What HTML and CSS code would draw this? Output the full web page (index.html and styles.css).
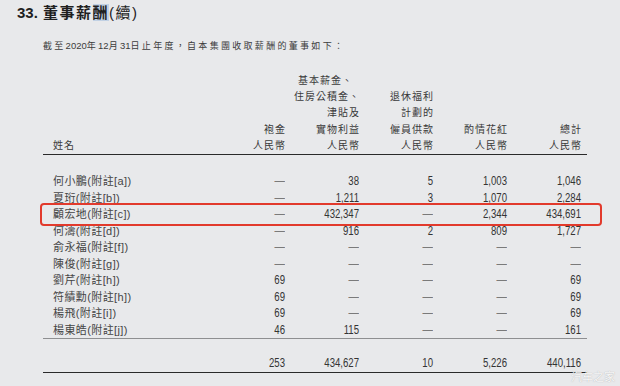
FILE: index.html
```html
<!DOCTYPE html>
<html lang="zh-Hant">
<head>
<meta charset="utf-8">
<title>董事薪酬</title>
<link rel="stylesheet" href="styles.css">
</head>
<body>
<div class="page">
  <h1 class="title"><span class="t-num">33.</span><span class="t-main">董事薪<span class="sel">酬</span></span><span class="t-sub">(續)</span></h1>
  <p class="intro">截至<span class="d">2020</span>年<span class="d">12</span>月<span class="d">31</span>日止年度，自本集團收取薪酬的董事如下：</p>

  <div class="tbl">
    <div class="row head">
      <div class="c name">姓名</div>
      <div class="c">袍金<br>人民幣</div>
      <div class="c"><span class="l1">基本薪金、</span><br>住房公積金、<br>津貼及<br>實物利益<br>人民幣</div>
      <div class="c">退休福利<br>計劃的<br>僱員供款<br>人民幣</div>
      <div class="c">酌情花紅<br>人民幣</div>
      <div class="c">總計<br>人民幣</div>
    </div>

    <div class="body">
      <div class="row"><div class="c name">何小鵬(附註[a])</div><div class="c"><span class="dash">—</span></div><div class="c">38</div><div class="c">5</div><div class="c">1,003</div><div class="c">1,046</div></div>
      <div class="row"><div class="c name">夏珩(附註[b])</div><div class="c"><span class="dash">—</span></div><div class="c">1,211</div><div class="c">3</div><div class="c">1,070</div><div class="c">2,284</div></div>
      <div class="row mark"><div class="c name">顧宏地(附註[c])</div><div class="c"><span class="dash">—</span></div><div class="c">432,347</div><div class="c"><span class="dash">—</span></div><div class="c">2,344</div><div class="c">434,691</div></div>
      <div class="row"><div class="c name">何濤(附註[d])</div><div class="c"><span class="dash">—</span></div><div class="c">916</div><div class="c">2</div><div class="c">809</div><div class="c">1,727</div></div>
      <div class="row"><div class="c name">俞永福(附註[f])</div><div class="c"><span class="dash">—</span></div><div class="c"><span class="dash">—</span></div><div class="c"><span class="dash">—</span></div><div class="c"><span class="dash">—</span></div><div class="c"><span class="dash">—</span></div></div>
      <div class="row"><div class="c name">陳俊(附註[g])</div><div class="c"><span class="dash">—</span></div><div class="c"><span class="dash">—</span></div><div class="c"><span class="dash">—</span></div><div class="c"><span class="dash">—</span></div><div class="c"><span class="dash">—</span></div></div>
      <div class="row"><div class="c name">劉芹(附註[h])</div><div class="c">69</div><div class="c"><span class="dash">—</span></div><div class="c"><span class="dash">—</span></div><div class="c"><span class="dash">—</span></div><div class="c">69</div></div>
      <div class="row"><div class="c name">符績勳(附註[h])</div><div class="c">69</div><div class="c"><span class="dash">—</span></div><div class="c"><span class="dash">—</span></div><div class="c"><span class="dash">—</span></div><div class="c">69</div></div>
      <div class="row"><div class="c name">楊飛(附註[i])</div><div class="c">69</div><div class="c"><span class="dash">—</span></div><div class="c"><span class="dash">—</span></div><div class="c"><span class="dash">—</span></div><div class="c">69</div></div>
      <div class="row"><div class="c name">楊東皓(附註[j])</div><div class="c">46</div><div class="c">115</div><div class="c"><span class="dash">—</span></div><div class="c"><span class="dash">—</span></div><div class="c">161</div></div>
    </div>

    <div class="row total">
      <div class="c name"></div><div class="c">253</div><div class="c">434,627</div><div class="c">10</div><div class="c">5,226</div><div class="c">440,116</div>
    </div>
  </div>
</div>
<div class="watermark">汽车之家</div>
</body>
</html>
```
FILE: styles.css
```css
html, body {
  margin: 0;
  padding: 0;
}
body {
  width: 620px;
  height: 386px;
  overflow: hidden;
  background: #e8e9eb;
  font-family: "Liberation Sans", "Noto Sans CJK TC", sans-serif;
  color: #3a3a3a;
  position: relative;
}
.page {
  padding: 4px 33px 0 17px;
}
.title {
  margin: 0;
  height: 18px;
  line-height: 18px;
  font-size: 15px;
  display: flex;
  align-items: center;
  color: #1f1f1f;
}
.t-num {
  font-weight: 700;
  width: 26px;
}
.t-main {
  font-weight: 700;
  letter-spacing: 1.5px;
}
.sel {
  background: rgba(120, 165, 215, 0.35);
}
.t-sub {
  font-weight: 400;
  letter-spacing: 1.5px;
}
.intro {
  margin: 18px 0 0 26px;
  font-size: 9px;
  line-height: 12px;
  letter-spacing: 2.3px;
  color: #3c3c3c;
}
.intro .d {
  letter-spacing: 0;
  font-size: 9.5px;
}
.tbl {
  margin: 21px 0 0 26px;
}
.row {
  display: grid;
  grid-template-columns: 1fr repeat(5, 74px);
  padding-right: 6px;
}
.c {
  text-align: right;
  white-space: nowrap;
}
.c.name {
  text-align: left;
  padding-left: 10px;
}
.head {
  align-items: end;
  font-size: 10px;
  line-height: 16.2px;
  letter-spacing: 1px;
  color: #3a3a3a;
  border-bottom: 1.5px solid #2a2a2a;
}
.head .c {
  margin-right: -1px;
}
.head .c.name {
  margin-right: 0;
}
.head .l1 {
  padding-right: 7px;
}
.body {
  padding-top: 18px;
  border-bottom: 1px solid #8e8f91;
}
.body .row, .total {
  height: 16.5px;
  line-height: 16.5px;
  align-items: center;
}
.body .c, .total .c {
  font-family: "Liberation Sans", sans-serif;
  font-size: 12px;
  color: #343434;
  transform: scaleX(0.8);
  transform-origin: right center;
}
.body .c.name {
  font-family: "Liberation Sans", "Noto Sans CJK TC", sans-serif;
  font-size: 11px;
  letter-spacing: 0.4px;
  color: #454545;
  transform: none;
}
.dash {
  font-family: "Liberation Sans", sans-serif;
  font-size: 13px;
  color: #7a7a7a;
}
.mark {
  position: relative;
}
.mark::after {
  content: "";
  position: absolute;
  left: -3px;
  right: -15px;
  top: -3px;
  bottom: -3px;
  border: 2px solid #e23a2c;
  border-radius: 4px;
}
.total {
  margin-top: 15.5px;
  border-bottom: 1.5px solid #2a2a2a;
  box-sizing: content-box;
  padding-bottom: 1px;
}
.watermark {
  position: absolute;
  right: 5px;
  bottom: 3px;
  font-family: "Noto Sans CJK SC", sans-serif;
  font-size: 11px;
  line-height: 13px;
  color: rgba(255, 255, 255, 0.92);
  text-shadow: 0 0 1px rgba(100, 100, 100, 0.5);
}
```
